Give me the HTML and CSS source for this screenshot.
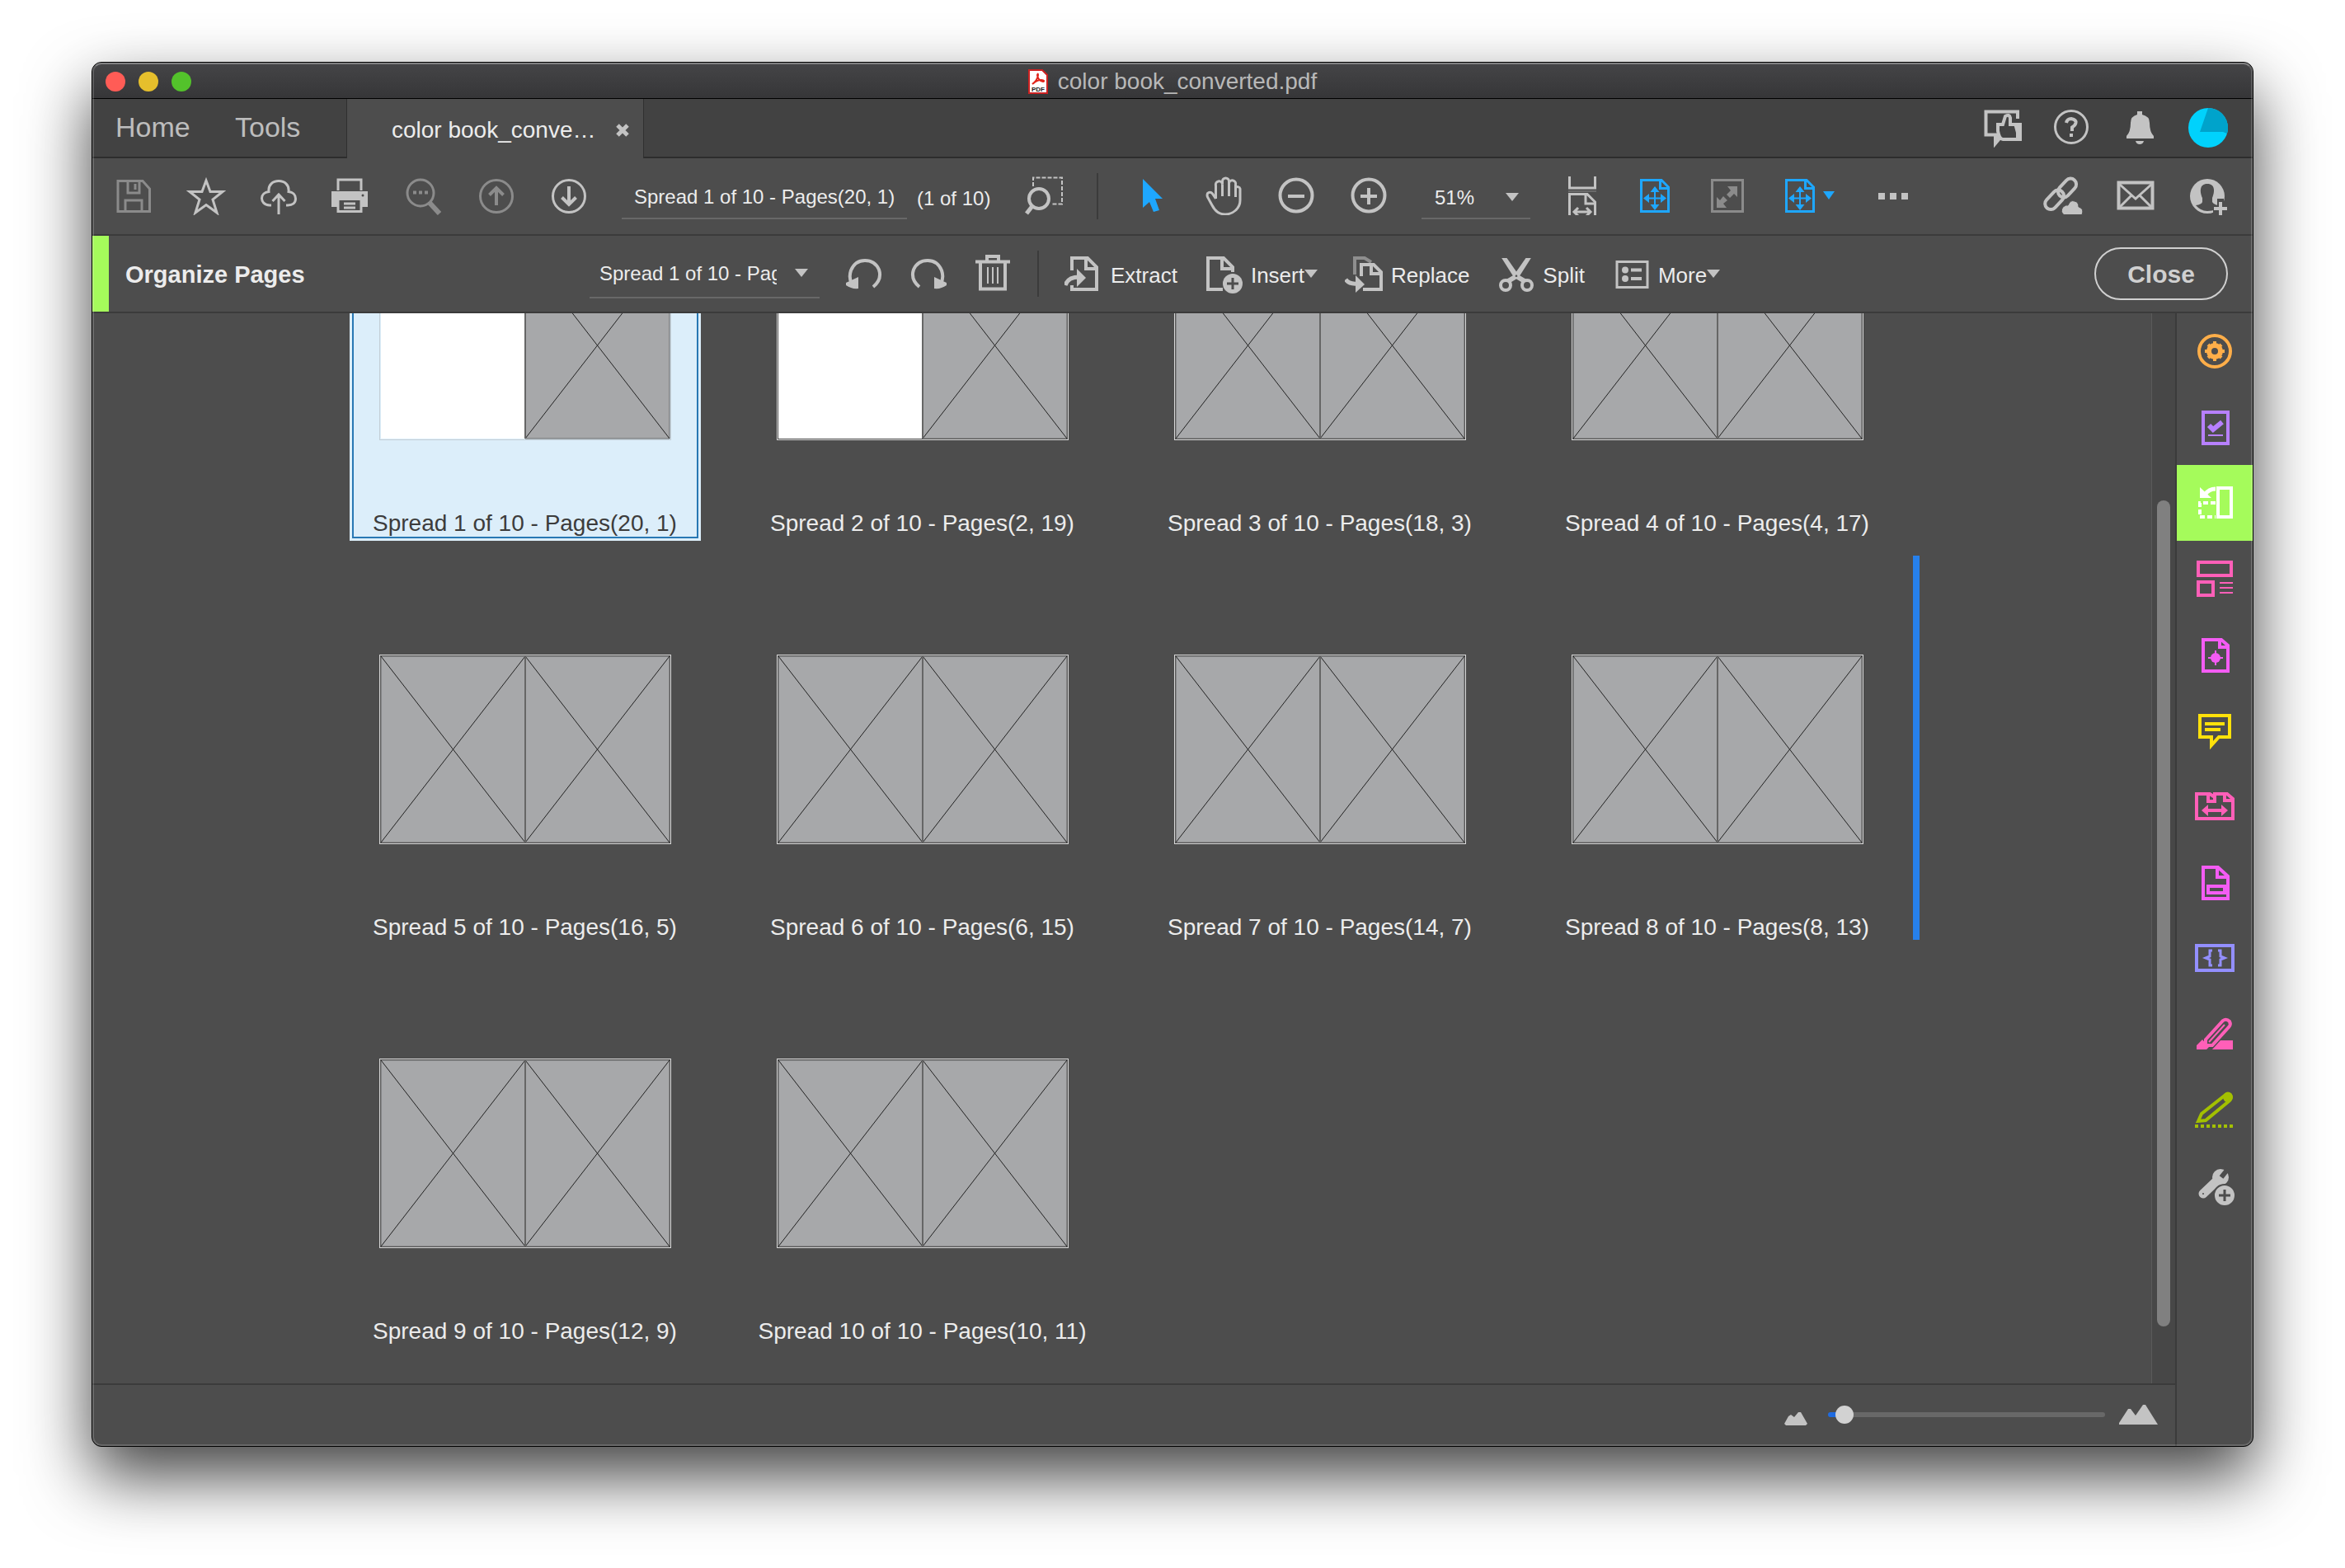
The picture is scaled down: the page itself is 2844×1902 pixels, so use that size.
FILE: index.html
```html
<!DOCTYPE html>
<html lang="en">
    <head>
        <meta charset="utf-8">
        <title>color book_converted.pdf</title>
        <link rel="stylesheet" href="styles.css">
    </head>

    <body>
        <svg class="sprite" aria-hidden="true">
            <!-- toolbar -->
            <symbol id="save" viewBox="0 0 48 48"><path d="M5 6.500H35L43.500 16V43.500H5Z M17 7V21H31V7 M26 10V17 M14 43V30H34V43"/></symbol>
            <symbol id="star" viewBox="0 0 48 48"><path d="M24 6L29 19.500L44 19.500L32 29L37 45L24 35.500L11 45L16 29L4 19.500L19 19.500Z"/></symbol>
            <symbol id="upload" viewBox="0 0 48 48"><path d="M15 36H13C6 36 3.500 31 3.500 27.500C3.500 23 7 20 12 19.500C11 11 17 6.500 24 6.500S37 11 36 19.500C41 20 44.500 23 44.500 28S41 36 35 36H33 M24 47V23 M16.500 31L24 23L31.500 31"/></symbol>
            <symbol id="print" viewBox="0 0 48 48"><path d="M8 18V5H36V18"/><path d="M0 19H44V38H36V30H8V38H0Z" fill="currentColor" stroke="none"/><path d="M8 30V43.500H36V30 M15 34H29 M15 39H29"/><circle cx="38" cy="24" r="1.500" fill="#4d4d4d" stroke="none"/></symbol>
            <symbol id="search" viewBox="0 0 48 48"><circle cx="20" cy="21" r="16"/><path d="M31 33L43 46" stroke-width="6"/><path d="M11 18.500H15V22.500H11Z M18 18.500H22V22.500H18Z M25 18.500H29V22.500H25Z" fill="currentColor" stroke="none"/></symbol>
            <symbol id="up" viewBox="0 0 48 48"><circle cx="24" cy="25" r="19.500"/><path d="M24 36V16 M15.500 23.500L24 15L32.500 23.500" stroke-width="4"/></symbol>
            <symbol id="down" viewBox="0 0 48 48"><circle cx="24" cy="25" r="19.500"/><path d="M24 13V34 M15.500 26.500L24 35L32.500 26.500" stroke-width="4"/></symbol>
            <symbol id="marquee" viewBox="0 0 48 48"><circle cx="17" cy="28" r="12" stroke-width="4"/><path d="M9 37L2 46" stroke-width="5"/><path d="M10 13V2.500H45V34.500H33" stroke-width="2" stroke-dasharray="5 2"/></symbol>
            <symbol id="pointer" viewBox="0 0 48 48"><path d="M14 4L38 28H29L34 42L27 44L22 32L14 39Z" fill="currentColor" stroke="none"/></symbol>
            <symbol id="hand" viewBox="0 0 48 48"><path d="M14.500 28V12A4 4 0 0 1 22.500 10V7A4 4 0 0 1 30.500 7V9A4 4 0 0 1 38.500 11V15A3 3 0 0 1 44 16V30C44 40 35 47 26 47C18 47 13 42 10 36L4.500 26C2.500 20 8 19 10.500 22L14.500 28 M22.500 9V25 M30.500 9V25 M38.500 12V26"/></symbol>
            <symbol id="minus" viewBox="0 0 48 48"><circle cx="24" cy="24" r="19.500" stroke-width="4"/><path d="M14 25H34" stroke-width="4"/></symbol>
            <symbol id="plus" viewBox="0 0 48 48"><circle cx="24" cy="24" r="19.500" stroke-width="4"/><path d="M14 25H34 M24 15V35" stroke-width="4"/></symbol>
            <symbol id="fitwidth" viewBox="0 0 48 48"><path d="M8.500 1V15H39.500V1 M8.500 49V22.500H30L39.500 32V49 M28 23V34H39 M14 44H34 M19 39L14 44L19 49 M29 39L34 44L29 49"/><path d="M7 19H41" stroke="#6a6a6a" stroke-width="2"/></symbol>
            <symbol id="fitpage" viewBox="0 0 48 48"><path d="M7.500 5.500H32L40.500 14V43.500H7.500Z M30.500 6V15.500H40"/><path d="M24 16V40 M12 27.500H36" stroke-width="2"/><path d="M24 13L29.500 20H18.500Z M24 42L29.500 35H18.500Z M10 27.500L17 22V33Z M38 27.500L31 22V33Z" fill="currentColor" stroke="none"/></symbol>
            <symbol id="fullscreen" viewBox="0 0 48 48"><rect x="5.500" y="5.500" width="37" height="38"/><path d="M36 13V26L32 22L27 27L23 23L28 18L24 13Z M11 39V26L15 30L19 25L24 30L19 34L23 39Z" fill="currentColor" stroke="none"/></symbol>
            <symbol id="dots" viewBox="0 0 48 48"><path d="M6 21H14V29H6Z M20 21H28V29H20Z M34 21H42V29H34Z" fill="currentColor" stroke="none"/></symbol>
            <symbol id="link" viewBox="0 0 48 48"><g stroke-width="4"><rect x="16" y="8" width="26" height="14" rx="7" transform="rotate(-47 29 15)"/><rect x="0" y="22" width="27" height="14" rx="7" transform="rotate(-47 14 29)"/></g><path d="M25 47.500Q20 44 24 38Q28 35 30 36Q33 29 38 31Q43 32 43 38Q50 40 47 47.500Z" fill="currentColor" stroke="#4d4d4d" stroke-width="1"/></symbol>
            <symbol id="mail" viewBox="0 0 48 48"><rect x="3.500" y="8.500" width="41" height="31" stroke-width="4"/><path d="M4 10L24 28L44 10 M4 39L19 24 M44 39L29 24" stroke-width="3"/></symbol>
            <symbol id="person" viewBox="0 0 48 48"><circle cx="23" cy="25" r="21" fill="currentColor" stroke="none"/><path d="M23 10C33 10 32 20 29 27V32Q31 35 36 36V40Q30 43 23 43Q15 43 9 36Q16 35 17 32V27C14 20 13 10 23 10Z" fill="#4d4d4d" stroke="none"/><path d="M35 28H43V36H48V48H30V36H35Z" fill="#4d4d4d" stroke="none"/><path d="M31 40H47 M39 32V48" stroke-width="4"/></symbol>
            <symbol id="feedback" viewBox="0 0 48 48"><path d="M42 13V4.500H3.500V32.500H15V43L20 37" stroke-width="4"/><path d="M13 32H22V37L14 45Z" fill="currentColor" stroke="none"/><path d="M18 20H24L27 10Q32 7 33 12V20H45V38H24Q20 38 18 28Z" fill="#424242" stroke-width="4"/><path d="M37 19H46V40H40V30Z" fill="currentColor" stroke="none"/></symbol>
            <symbol id="help" viewBox="0 0 48 48"><circle cx="24" cy="23" r="19.500"/><path d="M18 18Q19 13 24 13Q30 14 29.500 18Q29 21 25 23.500V28 M24 31V35" stroke-width="4"/></symbol>
            <symbol id="bell" viewBox="0 0 48 48"><path d="M21 4H27V8Q36 10 36 18Q36 29 41 34V37H8V34Q13 29 13 18Q13 10 21 8Z M19 40H29Q28 44 24 44Q20 44 19 40Z" fill="currentColor" stroke="none"/></symbol>
            <symbol id="avatar" viewBox="0 0 48 48"><circle cx="24" cy="24" r="24" fill="#00d2fc" stroke="none"/><path d="M24 0A24 24 0 0 1 47 31L42 29H14Z" fill="#00a3cb" stroke="none"/></symbol>

            <!-- organize pages -->
            <symbol id="rotateleft" viewBox="0 0 48 48"><path d="M9 37Q5 30 8 21Q13 9 25 9Q37 9 42 20Q46 32 35 41" stroke-width="4"/><path d="M2 36L17 29V43Q9 44 2 39Z" fill="currentColor" stroke="none"/></symbol>
            <symbol id="rotateright" viewBox="0 0 48 48"><path d="M39 37Q43 30 40 21Q35 9 23 9Q11 9 6 20Q2 32 13 41" stroke-width="4"/><path d="M46 36L31 29V43Q39 44 46 39Z" fill="currentColor" stroke="none"/></symbol>
            <symbol id="trash" viewBox="0 0 48 48"><path d="M3 10.500H45 M17 9V4H31V9" stroke-width="4"/><path d="M9 11V43.500H39V11" stroke-width="4"/><path d="M18 17V37 M24 17V37 M30 17V37" stroke-width="2"/></symbol>
            <symbol id="extract" viewBox="0 0 48 48"><path d="M9 20V5H28L39 16V43H9V38 M26 6V18H38" stroke-width="4"/><path d="M1 38Q4 28 18 28" stroke-width="5"/><path d="M15 18L26 29L15 40Z" fill="currentColor" stroke="none"/></symbol>
            <symbol id="insert" viewBox="0 0 48 48"><path d="M22 43H4V5H23L34 16V22 M21 6V18H33" stroke-width="4"/><circle cx="34" cy="36" r="12" fill="currentColor" stroke="none"/><path d="M27 36H41 M34 29V43" stroke="#4d4d4d"/></symbol>
            <symbol id="replace" viewBox="0 0 48 48"><path d="M12 25V5H24L32 10" stroke="#8e8e8e" stroke-width="4"/><path d="M20 27V13H35L44 22V43H22 M32 14V24H43" stroke-width="4"/><path d="M1 31Q5 37 15 36" stroke-width="5"/><path d="M13 26L24 37L13 47Z" fill="currentColor" stroke="none"/></symbol>
            <symbol id="split" viewBox="0 0 48 48"><circle cx="11" cy="38" r="6" stroke-width="4"/><circle cx="37" cy="38" r="6" stroke-width="4"/><path d="M8 6L12 6L26 26L36 32L32 34L22 28Z M40 6L36 6L22 26L12 32L16 34L26 28Z" fill="currentColor" stroke-width="2"/></symbol>
            <symbol id="more" viewBox="0 0 48 48"><rect x="6" y="9.500" width="37" height="31"/><path d="M23 19.500H36 M23 30H36" stroke-width="4"/><circle cx="16" cy="19.500" r="4" fill="currentColor" stroke="none"/><circle cx="16" cy="30" r="4" fill="currentColor" stroke="none"/></symbol>

            <!-- side panel -->
            <symbol id="gear" viewBox="0 0 48 48"><circle cx="24" cy="24" r="19" stroke-width="4"/><circle cx="24" cy="24" r="7" stroke-width="6"/><path d="M24 12V36 M12 24H36 M16 16L32 32 M32 16L16 32" stroke-width="4"/><circle cx="24" cy="24" r="4" fill="#4d4d4d" stroke="none"/></symbol>
            <symbol id="checkdoc" viewBox="0 0 48 48"><rect x="10" y="6" width="30" height="38" stroke-width="4"/><path d="M17 22L22 27L33 18" stroke-width="6"/><path d="M16 34H34" stroke-width="2"/></symbol>
            <symbol id="organize" viewBox="0 0 48 48"><rect x="28" y="6" width="16" height="35" stroke-width="4"/><path d="M25 24H6V41H25" stroke-width="4" stroke-dasharray="6 3"/><path d="M25 7Q17 7 12 14" stroke-width="5"/><path d="M6 5V18H20Z" fill="currentColor" stroke="none"/></symbol>
            <symbol id="layout" viewBox="0 0 48 48"><rect x="4" y="4" width="40" height="16" stroke-width="4"/><rect x="4" y="28" width="18" height="16" stroke-width="4"/><path d="M30 29H46 M30 35H46 M30 41H46" stroke-width="2"/></symbol>
            <symbol id="target" viewBox="0 0 48 48"><path d="M10 6H32L40 13V44H10Z M30 7V15H39" stroke-width="4"/><circle cx="25" cy="28" r="6" fill="currentColor" stroke="none"/><path d="M16 28H34 M25 19V37" stroke-width="2"/></symbol>
            <symbol id="comment" viewBox="0 0 48 48"><path d="M6 6H42V32H29L20 42V32H6Z" stroke-width="4"/><path d="M12 16H36 M12 23H31" stroke-width="4"/></symbol>
            <symbol id="combine" viewBox="0 0 48 48"><path d="M2 9H18L24 13V9H39L46 15V39H2Z M16 9V18H24V12 M36 9V17H45" stroke-width="4"/><path d="M12 29H36" stroke-width="4"/><path d="M8 29L16 22V36Z M40 29L32 22V36Z" fill="currentColor" stroke="none"/></symbol>
            <symbol id="redact" viewBox="0 0 48 48"><path d="M10 6H28L40 17V44H10Z M27 7V18H39" stroke-width="4"/><rect x="16" y="29" width="20" height="8" stroke-width="4"/></symbol>
            <symbol id="script" viewBox="0 0 48 48"><rect x="2" y="9" width="44" height="30" stroke-width="4"/><path d="M21 15H18V22L13 24L18 26V33H21 M28 15H31V22L36 24L31 26V33H28"/></symbol>
            <symbol id="marker" viewBox="0 0 48 48"><path d="M13 31L34 8Q38 5 42 9Q44 13 41 16L21 38H13Z" stroke-width="4"/><path d="M17 34L36 13" stroke-width="2"/><path d="M2 43V38L9 31L17 40L14 43Z M21 43L31 32H46V43Z" fill="currentColor" stroke="none"/></symbol>
            <symbol id="pen" viewBox="0 0 48 48"><path d="M4 38L8 29L37 6Q40 3 43 6Q45 9 42 13L13 37Z" stroke-width="4"/><circle cx="40" cy="9" r="6" fill="currentColor" stroke="none"/><path d="M0 44H48" stroke-width="4" stroke-dasharray="4 3"/></symbol>
            <symbol id="wrench" viewBox="0 0 48 48"><path d="M10 34L30 15" stroke-width="11" stroke-linecap="round"/><circle cx="31" cy="14" r="10" fill="currentColor" stroke="none"/><path d="M32 14L40 4" stroke="#4d4d4d" stroke-width="6"/><circle cx="10" cy="34" r="1" fill="#4d4d4d" stroke="none"/><circle cx="36" cy="36" r="13" fill="currentColor" stroke="#4d4d4d" stroke-width="2"/><path d="M29 36H43 M36 29V43" stroke="#4d4d4d"/></symbol>

            <!-- spreads -->
            <symbol id="crossed" viewBox="0 0 352 228"><path d="M1 1H351V227H1Z" fill="#a7a8aa" stroke="#666"/><path d="M1 1L176 227L351 1 M1 227L176 1L351 227" stroke="#222" fill="none"/><path d="M176 1V227" stroke="#666" stroke-width="2"/></symbol>
            <symbol id="halfblank" viewBox="0 0 352 228"><path d="M1 1H176V227H1Z" fill="#fff" stroke="none"/><path d="M176 1H351V227H176Z" fill="#a7a8aa" stroke="#666"/><path d="M176 1L351 227 M176 227L351 1" stroke="#222" fill="none"/><path d="M176 1V227" stroke="#666" stroke-width="2"/></symbol>
        </svg>

        <div class="window">
            <header class="titlebar">
                <div class="lights"><span class="red"></span><span class="yellow"></span><span class="green"></span></div>
                <svg class="pdf" viewBox="0 0 24 30"><path d="M1 1H17L23 7V29H1Z" fill="#fff" stroke="#c22" stroke-width="2"/><path d="M5 18Q11 14 12 7Q12 4 11 7Q12 14 18 15Q21 14 16 13Q10 13 5 18" fill="none" stroke="#e0251b" stroke-width="2"/><text x="12" y="27" class="pdf-text">PDF</text></svg>
                <span>color book_converted.pdf</span>
            </header>

            <nav class="tabs">
                <a class="home" href="#">Home</a>
                <a class="tools" href="#">Tools</a>
                <div class="tab">
                    <a href="#">color book_conve…</a>
                    <button class="tab-close" aria-label="Close tab"><svg viewBox="0 0 16 16"><path d="M2 2L14 14M14 2L2 14"/></svg></button>
                </div>
                <div class="tab-icons">
                    <button aria-label="Feedback"><svg class="icon"><use href="#feedback"/></svg></button>
                    <button aria-label="Help"><svg class="icon"><use href="#help"/></svg></button>
                    <button aria-label="Notifications"><svg class="icon"><use href="#bell"/></svg></button>
                    <button aria-label="Account"><svg class="icon"><use href="#avatar"/></svg></button>
                </div>
            </nav>

            <div class="toolbar main-tools">
                <button class="slot" aria-label="Save" disabled><svg class="icon"><use href="#save"/></svg></button>
                <button class="slot" aria-label="Favorite"><svg class="icon"><use href="#star"/></svg></button>
                <button class="slot" aria-label="Upload"><svg class="icon"><use href="#upload"/></svg></button>
                <button class="slot" aria-label="Print"><svg class="icon"><use href="#print"/></svg></button>
                <button class="slot" aria-label="Find" disabled><svg class="icon"><use href="#search"/></svg></button>
                <button class="slot" aria-label="Previous page" disabled><svg class="icon"><use href="#up"/></svg></button>
                <button class="slot" aria-label="Next page"><svg class="icon"><use href="#down"/></svg></button>
                <input class="page-field" type="text" aria-label="Current page" value="Spread 1 of 10 - Pages(20, 1)">
                <span class="count">(1 of 10)</span>
                <button class="slot" aria-label="Marquee zoom"><svg class="icon"><use href="#marquee"/></svg></button>
                <span class="separator"></span>
                <button class="slot blue" aria-label="Select"><svg class="icon"><use href="#pointer"/></svg></button>
                <button class="slot" aria-label="Pan"><svg class="icon"><use href="#hand"/></svg></button>
                <button class="slot" aria-label="Zoom out"><svg class="icon"><use href="#minus"/></svg></button>
                <button class="slot" aria-label="Zoom in"><svg class="icon"><use href="#plus"/></svg></button>
                <div class="dropdown zoom">
                    <select aria-label="Zoom level"><option>51%</option></select>
                </div>
                <button class="slot" aria-label="Fit width"><svg class="icon"><use href="#fitwidth"/></svg></button>
                <button class="slot blue" aria-label="Fit page"><svg class="icon"><use href="#fitpage"/></svg></button>
                <button class="slot" aria-label="Full screen" disabled><svg class="icon"><use href="#fullscreen"/></svg></button>
                <button class="slot wide blue" aria-label="Page display"><svg class="icon"><use href="#fitpage"/></svg><i class="caret"></i></button>
                <button class="slot" aria-label="More tools"><svg class="icon"><use href="#dots"/></svg></button>
                <span class="spacer"></span>
                <button class="slot" aria-label="Share link"><svg class="icon"><use href="#link"/></svg></button>
                <button class="slot" aria-label="Email"><svg class="icon"><use href="#mail"/></svg></button>
                <button class="slot" aria-label="Invite people"><svg class="icon"><use href="#person"/></svg></button>
            </div>

            <div class="toolbar page-tools">
                <h1>Organize Pages</h1>
                <div class="dropdown page-range">
                    <select aria-label="Page range"><option>Spread 1 of 10 - Pages(20, 1)</option></select>
                </div>
                <button class="slot" aria-label="Rotate left"><svg class="icon"><use href="#rotateleft"/></svg></button>
                <button class="slot" aria-label="Rotate right"><svg class="icon"><use href="#rotateright"/></svg></button>
                <button class="slot" aria-label="Delete"><svg class="icon"><use href="#trash"/></svg></button>
                <span class="separator"></span>
                <div class="actions">
                    <button><svg class="icon"><use href="#extract"/></svg><span>Extract</span></button>
                    <button><svg class="icon"><use href="#insert"/></svg><span>Insert</span><i class="caret"></i></button>
                    <button><svg class="icon"><use href="#replace"/></svg><span>Replace</span></button>
                    <button><svg class="icon"><use href="#split"/></svg><span>Split</span></button>
                    <button><svg class="icon"><use href="#more"/></svg><span>More</span><i class="caret"></i></button>
                </div>
                <span class="spacer"></span>
                <button class="close">Close</button>
            </div>

            <div class="content">
                <main>
                    <div class="viewport">
                        <div class="spreads">
                            <figure class="spread selected"><svg><use href="#halfblank"/></svg><figcaption>Spread 1 of 10 - Pages(20, 1)</figcaption></figure>
                            <figure class="spread"><svg><use href="#halfblank"/></svg><figcaption>Spread 2 of 10 - Pages(2, 19)</figcaption></figure>
                            <figure class="spread"><svg><use href="#crossed"/></svg><figcaption>Spread 3 of 10 - Pages(18, 3)</figcaption></figure>
                            <figure class="spread"><svg><use href="#crossed"/></svg><figcaption>Spread 4 of 10 - Pages(4, 17)</figcaption></figure>
                            <figure class="spread"><svg><use href="#crossed"/></svg><figcaption>Spread 5 of 10 - Pages(16, 5)</figcaption></figure>
                            <figure class="spread"><svg><use href="#crossed"/></svg><figcaption>Spread 6 of 10 - Pages(6, 15)</figcaption></figure>
                            <figure class="spread"><svg><use href="#crossed"/></svg><figcaption>Spread 7 of 10 - Pages(14, 7)</figcaption></figure>
                            <figure class="spread drop-after"><svg><use href="#crossed"/></svg><figcaption>Spread 8 of 10 - Pages(8, 13)</figcaption></figure>
                            <figure class="spread"><svg><use href="#crossed"/></svg><figcaption>Spread 9 of 10 - Pages(12, 9)</figcaption></figure>
                            <figure class="spread"><svg><use href="#crossed"/></svg><figcaption>Spread 10 of 10 - Pages(10, 11)</figcaption></figure>
                        </div>
                        <div class="scrollbar"><div class="thumb"></div></div>
                    </div>

                    <footer>
                        <svg class="small-hill" viewBox="0 0 28 26"><path d="M0 24L5 15L8 13L12 16L17 10H20L28 24L26 26H2Z"/></svg>
                        <input type="range" aria-label="Thumbnail size" min="0" max="100" value="3">
                        <svg class="big-hill" viewBox="0 0 48 24"><path d="M0 24V22L11 5H14L20 13L29 0H32L47 24Z"/></svg>
                    </footer>
                </main>

                <aside>
                    <button class="orange" aria-label="Optimize"><svg class="icon"><use href="#gear"/></svg></button>
                    <button class="purple" aria-label="Preflight"><svg class="icon"><use href="#checkdoc"/></svg></button>
                    <button class="current" aria-label="Organize pages"><svg class="icon"><use href="#organize"/></svg></button>
                    <button class="pink" aria-label="Rich media"><svg class="icon"><use href="#layout"/></svg></button>
                    <button class="magenta" aria-label="Print production"><svg class="icon"><use href="#target"/></svg></button>
                    <button class="gold" aria-label="Comment"><svg class="icon"><use href="#comment"/></svg></button>
                    <button class="pink" aria-label="Combine files"><svg class="icon"><use href="#combine"/></svg></button>
                    <button class="magenta" aria-label="Prepare form"><svg class="icon"><use href="#redact"/></svg></button>
                    <button class="violet" aria-label="JavaScript"><svg class="icon"><use href="#script"/></svg></button>
                    <button class="pink" aria-label="Redact"><svg class="icon"><use href="#marker"/></svg></button>
                    <button class="olive" aria-label="Fill and sign"><svg class="icon"><use href="#pen"/></svg></button>
                    <button aria-label="Add tools"><svg class="icon"><use href="#wrench"/></svg></button>
                </aside>
            </div>
        </div>
    </body>
</html>
```
FILE: styles.css
```css
* {
    box-sizing: border-box;
}

body {
    background-color: white;
    color: #ececec;
    display: flex;
    font-family: "Liberation Sans", Arial, sans-serif;
    font-size: 24px;
    margin: 0;
    min-height: 100vh;
    padding: 75px 111px 147px;
}

button,
input,
select {
    background: none;
    border: 0;
    color: inherit;
    font: inherit;
    margin: 0;
    padding: 0;
}

button {
    align-items: center;
    color: #c3c3c3;
    display: flex;
    justify-content: center;
}

button:disabled {
    color: #8b8b8b;
}

a {
    color: inherit;
    text-decoration: none;
}

.sprite {
    height: 0;
    position: absolute;
    width: 0;
}

.icon {
    fill: none;
    flex: none;
    height: 48px;
    stroke: currentColor;
    stroke-width: 3px;
    width: 48px;
}

.spacer {
    flex: 1;
}

.caret {
    border: 8px solid transparent;
    border-bottom: 0;
    border-top: 10px solid #c3c3c3;
}

.blue {
    color: #1ea7ff;
}

/* window frame */
.window {
    background-color: #4d4d4d;
    border: 1px solid black;
    border-radius: 12px;
    box-shadow: 0 36px 80px rgba(0, 0, 0, 0.74);
    display: flex;
    flex: 1;
    flex-direction: column;
    min-width: 0;
    overflow: hidden;
    position: relative;
}

.window::after {
    border: 2px solid rgba(255, 255, 255, 0.16);
    border-radius: 11px;
    border-top-color: rgba(255, 255, 255, 0.32);
    content: "";
    inset: 0;
    pointer-events: none;
    position: absolute;
}

.titlebar {
    align-items: center;
    background: linear-gradient(#454547, #363638);
    border-bottom: 1px solid black;
    color: #b8b8b8;
    display: grid;
    font-size: 28px;
    gap: 12px;
    grid-template-columns: 1fr auto auto 1fr;
    height: 44px;
    padding: 2px 16px 0;
}

.lights {
    display: flex;
    gap: 16px;
}

.lights span {
    border-radius: 50%;
    height: 24px;
    width: 24px;
}

.red {
    background-color: #ff5c56;
}

.yellow {
    background-color: #e6bf2c;
}

.green {
    background-color: #53c22b;
}

.pdf {
    height: 30px;
    width: 24px;
}

.pdf-text {
    fill: #222;
    font-size: 8px;
    font-weight: bold;
    text-anchor: middle;
}

/* tabs */
.tabs {
    align-items: center;
    background-color: #424242;
    border-bottom: 2px solid #2d2d2d;
    color: #bdbdbd;
    display: flex;
    font-size: 34px;
    height: 72px;
}

.home,
.tools {
    padding-bottom: 2px;
}

.home {
    padding-left: 28px;
    width: 173px;
}

.tools {
    width: 135px;
}

.tab {
    align-items: center;
    align-self: stretch;
    background-color: #4d4d4d;
    border: 1px solid #303030;
    border-width: 0 1px;
    color: #ececec;
    display: flex;
    font-size: 28px;
    justify-content: space-between;
    margin-bottom: -2px;
    padding: 4px 17px 0 54px;
    width: 361px;
}

.tab-close svg {
    fill: none;
    height: 16px;
    stroke: #c3c3c3;
    stroke-width: 5px;
    width: 16px;
}

.tab-icons {
    display: flex;
    margin-left: auto;
    padding-right: 13px;
}

.tab-icons button {
    width: 83px;
}

/* toolbars */
.toolbar {
    align-items: center;
    border-bottom: 2px solid #3b3b3b;
    display: flex;
    height: 94px;
}

.toolbar > * {
    flex-shrink: 0;
}

.main-tools {
    padding: 0 10px 0 6px;
}

.slot {
    padding-bottom: 2px;
    width: 88px;
}

.wide {
    gap: 4px;
    justify-content: flex-start;
    padding-left: 20px;
    width: 113px;
}

.wide .caret {
    border-left-width: 7px;
    border-right-width: 7px;
    border-top-color: #1ea7ff;
}

.page-field {
    border-bottom: 2px solid #686868;
    height: 56px;
    margin-left: 20px;
    padding: 4px 0 0 15px;
    width: 346px;
}

.count {
    padding: 6px 0 0 12px;
    width: 123px;
}

.separator {
    background-color: #3b3b3b;
    height: 56px;
    margin: 0 20px 0 19px;
    width: 2px;
}

.dropdown {
    border-bottom: 2px solid #686868;
    display: flex;
    position: relative;
}

.dropdown select {
    appearance: none;
    flex: 1;
    min-width: 0;
    overflow: hidden;
    text-overflow: clip;
}

.dropdown::after {
    border: 8px solid transparent;
    border-bottom: 0;
    border-top: 10px solid #c3c3c3;
    content: "";
    pointer-events: none;
    position: absolute;
    right: 14px;
    top: 24px;
}

.zoom {
    height: 56px;
    margin: 0 19px 0 20px;
    padding: 4px 44px 0 16px;
    width: 132px;
}

.page-tools {
    background: linear-gradient(to right, #a5fb5b 20px, transparent 20px);
    padding: 0 30px 0 20px;
}

.page-tools h1 {
    font-size: 29px;
    margin: 0;
    padding: 2px 0 0 20px;
    width: 583px;
}

.page-range {
    height: 60px;
    margin-right: 15px;
    padding: 0 52px 0 12px;
    width: 279px;
}

.page-tools .slot {
    width: 78px;
}

.page-tools .separator {
    margin: 0 31px 0 15px;
}

.actions {
    display: flex;
    gap: 33px;
}

.actions button {
    color: #c3c3c3;
    font-size: 26px;
}

.actions span {
    color: #ececec;
    padding: 4px 0 0 8px;
}

.close {
    border: 2px solid #d0d0d0;
    border-radius: 32px;
    color: #d0d0d0;
    font-size: 30px;
    font-weight: bold;
    height: 64px;
    padding-top: 2px;
    width: 162px;
}

/* spreads */
.content {
    display: flex;
    flex: 1;
    min-height: 0;
}

main {
    border-right: 2px solid #3b3b3b;
    display: flex;
    flex: 1;
    flex-direction: column;
    min-width: 0;
}

.viewport {
    display: flex;
    flex: 1 1 0;
    min-height: 0;
}

.spreads {
    align-content: end;
    display: grid;
    flex: 1;
    gap: 24px 56px;
    grid-template-columns: repeat(4, 426px);
    justify-content: center;
    overflow: hidden;
    padding: 0 2px 42px 0;
}

.spread {
    align-items: center;
    display: flex;
    flex-direction: column;
    height: 466px;
    justify-content: space-between;
    margin: 0;
    padding: 114px 0 7px;
    position: relative;
}

.spread svg {
    border: 1px solid #d8d8d8;
    height: 230px;
    width: 354px;
}

.spread figcaption {
    font-size: 28px;
    line-height: 28px;
}

.selected {
    background-color: #dceefa;
    border: 3px solid #dceefa;
    color: #3c3c3c;
    outline: 2px solid #2878b4;
    outline-offset: -5px;
    padding: 111px 0 4px;
}

.selected svg {
    border-color: #c3ced6;
}

.drop-after::after {
    background-color: #2680eb;
    bottom: 6px;
    content: "";
    position: absolute;
    right: -32px;
    top: -6px;
    width: 8px;
}

.scrollbar {
    background-color: #474747;
    border-left: 1px solid #5a5a5a;
    display: grid;
    grid-template-rows: 227fr 1002fr 69fr;
    padding-left: 6px;
    width: 29px;
}

.thumb {
    background-color: #808080;
    border-radius: 8px;
    grid-row: 2;
    width: 16px;
}

footer {
    align-items: center;
    border-top: 2px solid #3b3b3b;
    display: flex;
    height: 76px;
    justify-content: flex-end;
    padding: 0 20px 2px 0;
}

footer svg {
    fill: #c3c3c3;
}

.small-hill {
    height: 26px;
    width: 28px;
}

.big-hill {
    height: 24px;
    width: 48px;
}

footer input {
    appearance: none;
    background: linear-gradient(to right, #1f6be0 10px, #686868 10px);
    border-radius: 3px;
    height: 6px;
    margin: 0 17px 0 25px;
    width: 336px;
}

footer input::-webkit-slider-thumb {
    appearance: none;
    background-color: #d2d2d2;
    border-radius: 50%;
    height: 22px;
    width: 22px;
}

/* side panel */
aside {
    width: 92px;
}

aside button {
    height: 92px;
    width: 100%;
}

.orange {
    color: #ffae49;
}

.purple {
    color: #b780ff;
}

.current {
    background-color: #a5fb5b;
    color: white;
}

.pink {
    color: #ff5fb8;
}

.magenta {
    color: #f45cf4;
}

.gold {
    color: #ffe10a;
}

.violet {
    color: #938fff;
}

.olive {
    color: #a3c000;
}
```
